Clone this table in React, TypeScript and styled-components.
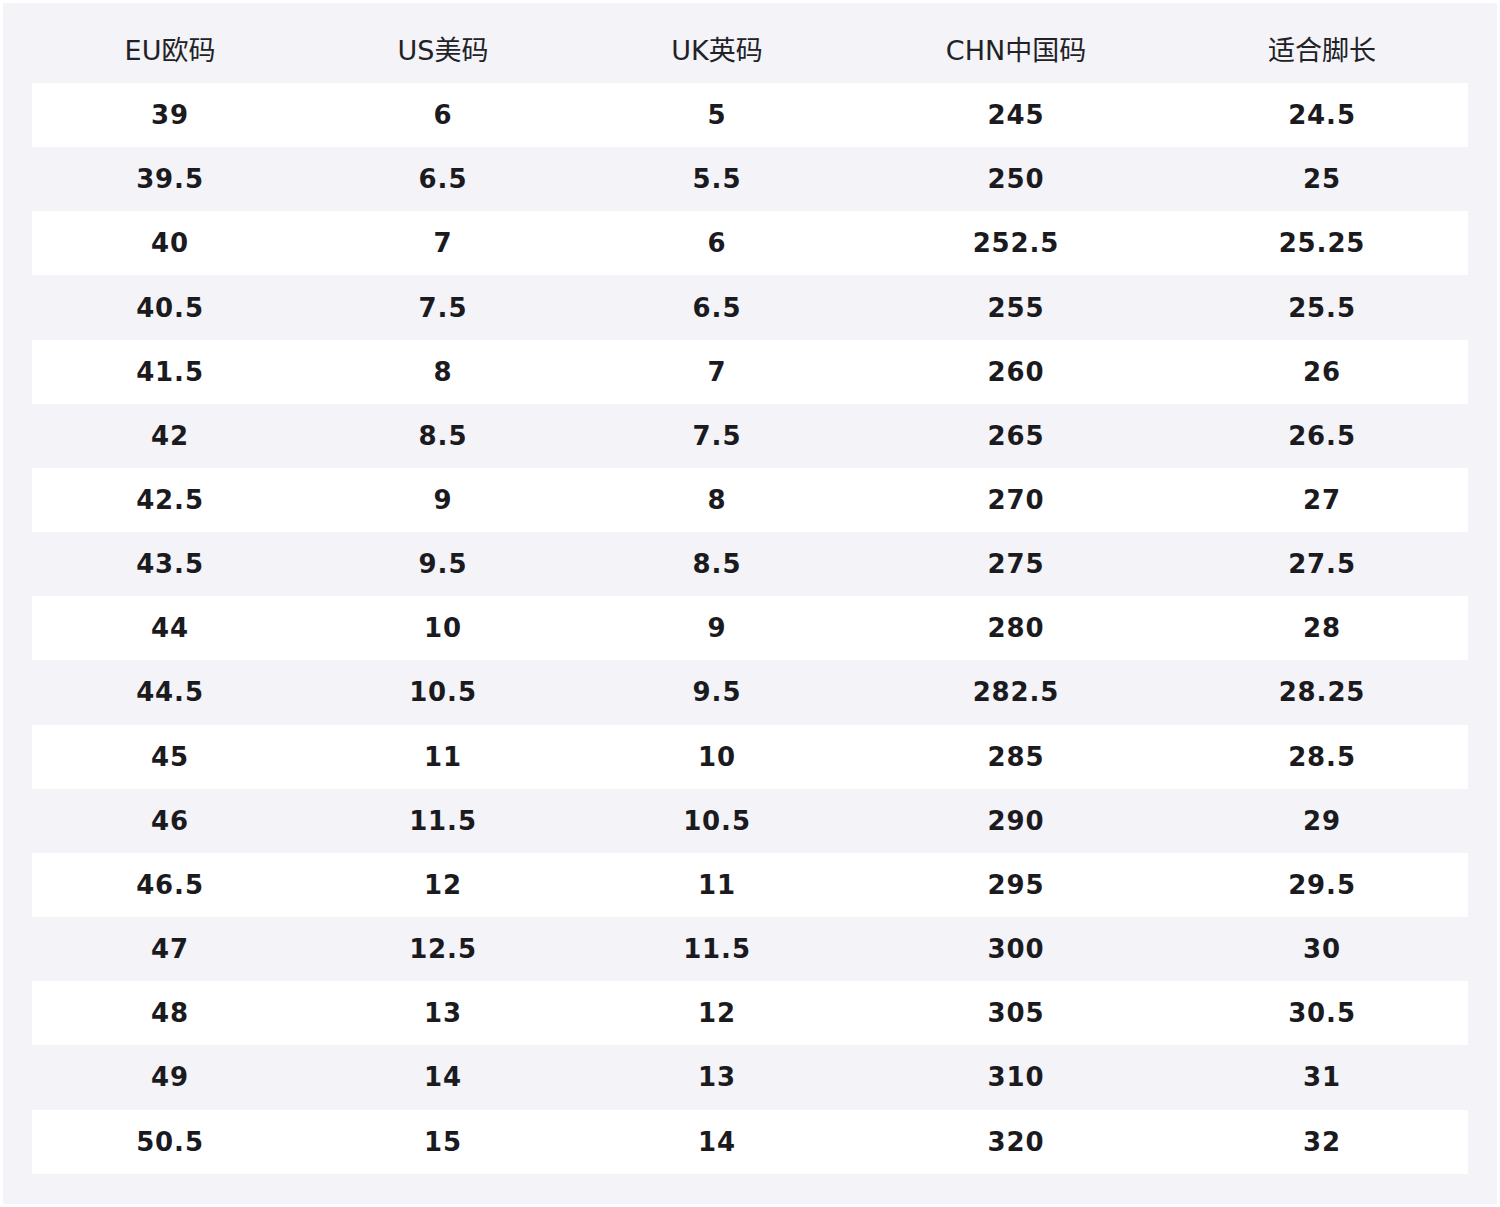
import React from "react";
import styled, { createGlobalStyle } from "styled-components";

const Global = createGlobalStyle`
  html, body { margin: 0; padding: 0; background: #ffffff; }
  #root { width: 1500px; }
`;

const Frame = styled.div`
  margin: 3px;
  height: 1201px;
  box-sizing: border-box;
  padding: 16px 29px 30px 29px;
  background: #f3f3f8;
`;

const Table = styled.table`
  width: 1436px;
  border-collapse: collapse;
  table-layout: fixed;
  font-family: "DejaVu Sans", "Noto Sans CJK SC", sans-serif;
  color: #1b1b1f;
`;

const HeadCell = styled.th`
  height: 64px;
  padding: 0 0 6px 0;
  box-sizing: border-box;
  font-size: 27px;
  font-weight: 400;
  text-align: center;
  vertical-align: middle;
  color: #222226;
`;

const Row = styled.tr<{ $striped: boolean }>`
  background: ${(p) => (p.$striped ? "#f3f3f8" : "#ffffff")};
`;

const Cell = styled.td`
  height: 64.17px;
  padding: 0;
  font-size: 26px;
  font-weight: 700;
  text-align: center;
  vertical-align: middle;
  letter-spacing: 0.9px;
`;

const widths = [276, 270, 278, 320, 292];
const headers = ["EU欧码", "US美码", "UK英码", "CHN中国码", "适合脚长"];
const rows: string[][] = [
  ["39", "6", "5", "245", "24.5"],
  ["39.5", "6.5", "5.5", "250", "25"],
  ["40", "7", "6", "252.5", "25.25"],
  ["40.5", "7.5", "6.5", "255", "25.5"],
  ["41.5", "8", "7", "260", "26"],
  ["42", "8.5", "7.5", "265", "26.5"],
  ["42.5", "9", "8", "270", "27"],
  ["43.5", "9.5", "8.5", "275", "27.5"],
  ["44", "10", "9", "280", "28"],
  ["44.5", "10.5", "9.5", "282.5", "28.25"],
  ["45", "11", "10", "285", "28.5"],
  ["46", "11.5", "10.5", "290", "29"],
  ["46.5", "12", "11", "295", "29.5"],
  ["47", "12.5", "11.5", "300", "30"],
  ["48", "13", "12", "305", "30.5"],
  ["49", "14", "13", "310", "31"],
  ["50.5", "15", "14", "320", "32"],
];

export default function App() {
  return (
    <>
      <Global />
      <Frame>
        <Table>
          <colgroup>
            {widths.map((w, i) => (
              <col key={i} style={{ width: w }} />
            ))}
          </colgroup>
          <thead>
            <tr>
              {headers.map((h) => (
                <HeadCell key={h}>{h}</HeadCell>
              ))}
            </tr>
          </thead>
          <tbody>
            {rows.map((r, i) => (
              <Row key={i} $striped={i % 2 === 1}>
                {r.map((c, j) => (
                  <Cell key={j}>{c}</Cell>
                ))}
              </Row>
            ))}
          </tbody>
        </Table>
      </Frame>
    </>
  );
}
